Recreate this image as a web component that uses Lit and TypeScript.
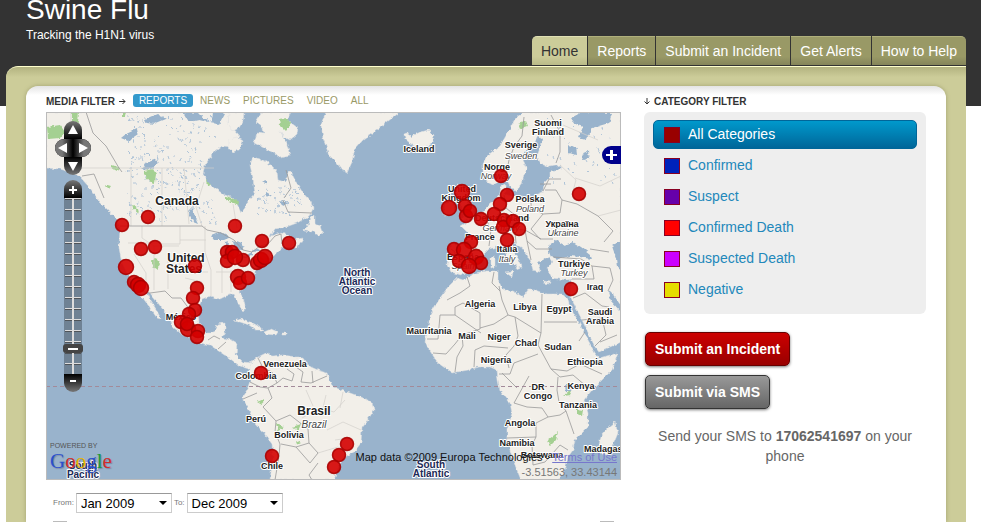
import { LitElement, html, css, svg } from "lit";
import { customElement } from "lit/decorators.js";
import { classMap } from "lit/directives/class-map.js";

type Label = [number, number, string, string];

const LAND = [
  // North and Central America
  "M46 112L231 112L228 123L240 136L233 147L222 146L213 153L205 165L203 173L207 183L217 190L225 195L234 198L238 206L241 213L245 208L248 201L255 193L253 178L250 165L253 157L260 159L267 162L273 167L277 173L278 180L285 182L290 170L296 182L303 193L311 202L313 209L309 216L297 223L286 227L275 229L270 236L277 234L282 232L288 235L293 240L303 238L297 248L290 247L283 247L277 252L273 257L263 262L257 266L255 271L254 279L246 285L239 291L243 298L246 308L243 312L238 303L234 294L226 296L220 299L210 296L202 299L198 309L199 323L206 333L214 333L217 324L225 323L225 332L222 338L232 340L237 343L236 355L243 362L252 363L250 369L240 366L229 358L220 352L210 345L200 343L187 337L174 328L167 315L158 303L150 293L147 291L150 300L156 309L161 319L157 318L148 305L140 294L135 290L128 275L122 263L119 248L120 228L117 220L107 209L100 202L90 188L80 177L73 173L60 169L46 168Z",
  // Arctic islands
  "M262 112L291 112L287 120L298 128L297 134L290 140L284 137L280 131L286 141L290 156L280 158L272 152L262 147L254 143L257 133L264 134L263 128L256 122Z",
  "M229 112L244 112L243 121L239 128L233 131L228 125Z",
  "M229 139L237 137L243 141L240 149L233 152L229 147Z",
  // Newfoundland
  "M304 231L309 223L311 217L315 216L315 224L321 226L323 232L319 236L314 232Z",
  // Greenland
  "M326 112L321 124L323 138L329 155L336 162L342 170L347 173L352 162L355 149L363 140L367 137L377 130L387 122L400 112Z",
  // Iceland
  "M404 134L408 133L411 137L418 133L428 130L434 135L433 142L425 147L414 146L410 143L405 139Z",
  // Cuba and Hispaniola
  "M233 321L241 319L251 322L258 326L264 330L256 330L249 325L240 322Z",
  "M264 332L271 329L278 332L276 335L265 334Z",
  "M281 333L286 333L286 335L281 335Z",
  // South America
  "M250 367L252 361L258 357L266 353L272 356L283 355L296 357L303 357L305 362L311 367L320 371L327 373L332 386L341 390L350 393L361 397L372 402L374 410L369 418L362 427L361 443L354 452L343 458L339 466L334 480L270 480L273 457L272 444L263 432L255 423L249 410L243 400L243 396L247 390L250 381Z",
  // Great Britain and Ireland
  "M458 184L465 186L463 193L467 203L474 212L474 218L460 221L465 213L461 208L461 200L457 192Z",
  "M445 204L452 202L455 206L453 214L444 215Z",
  // Europe and western Asia
  "M523 112L515 119L507 134L500 146L488 155L483 164L483 173L487 182L493 185L500 181L506 178L511 188L516 191L522 184L524 174L527 168L523 160L525 151L534 144L538 136L543 140L540 148L537 156L541 164L549 167L562 165L561 169L550 171L550 177L544 183L543 192L531 197L520 197L510 196L505 194L505 184L501 186L499 198L490 203L483 212L471 220L461 226L468 233L469 245L451 244L447 264L451 272L461 275L470 271L478 260L489 249L500 246L505 254L517 266L516 269L521 267L519 260L512 249L513 242L522 248L530 259L533 270L540 272L538 262L549 257L552 262L547 268L552 278L567 280L572 279L570 290L571 298L582 320L595 347L599 352L610 347L621 342L621 112Z",
  "M505 272L513 271L512 277Z",
  "M491 258L495 257L495 267L491 268Z",
  "M543 281L551 282L550 284L543 283Z",
  // Africa
  "M457 278L463 280L476 273L486 271L498 271L498 280L503 290L513 291L523 297L528 290L535 290L546 294L562 294L568 299L569 304L579 323L588 340L595 353L599 358L618 353L612 370L592 390L584 400L588 413L588 427L575 440L573 450L568 457L565 470L558 480L521 480L513 460L507 440L507 430L512 413L510 403L500 390L498 380L497 370L490 367L478 367L468 370L452 373L438 363L428 348L425 341L428 330L430 315L440 298L448 287Z",
  // Madagascar
  "M615 422L618 433L613 445L608 455L601 453L599 445L601 436L608 428Z",
];

const WATER = [
  "M549 252L548 246L556 240L564 245L573 242L581 247L590 254L592 259L580 257L570 256L558 259L551 257Z",
  "M612 246L621 240L621 270L617 268L616 258Z",
  "M608 291L613 294L621 306L621 312L611 301Z",
  "M211 236L221 232L231 237L224 240L214 240Z",
  "M225 243L229 242L228 254L224 257Z",
  "M233 240L241 243L244 249L238 252L234 246Z",
  "M243 257L252 252L252 255L245 259ZM252 251L259 248L260 251L253 252Z",
  "M188 211L192 207L196 220L198 224L193 222Z",
  "M142 170L146 163L157 159L159 162L151 169ZM121 138L126 134L137 129L138 134L128 141Z",
  "M145 119L157 114L166 119L154 124L147 123Z",
  "M183 112L199 113L208 122L199 120L189 122Z",
  "M213 112L225 114L219 125L212 122Z",
  "M571 118L582 112L612 113L609 123L592 128L586 140L578 138L583 127L575 124Z",
  "M568 145L576 147L577 155L568 153ZM581 154L588 151L589 158L583 160Z",
  "M565 385L572 385L571 391L566 391Z",
  "M262 181L267 180L267 184ZM280 201L288 203L283 206ZM267 193L272 196L266 196Z",
];

const GREEN = [
  "M47 127L60 125L65 132L60 138L48 139Z",
  "M72 112L79 112L78 123L72 121Z",
  "M144 171L153 169L156 174L155 183L149 181L144 175Z",
  "M279 119L287 118L291 124L286 131L280 125Z",
  "M206 180L210 184L207 187ZM226 196L237 200L239 205L226 200Z",
  "M104 184L111 186L109 189ZM111 165L120 168L118 171L111 167Z",
  "M132 204L138 209L139 213L133 208ZM122 112L126 112L125 117L122 117Z",
  "M152 260L156 258L160 264L157 270L153 267Z",
  "M257 402L264 399L262 405ZM276 424L284 427L278 430ZM292 427L301 424L298 431ZM296 440L301 443L297 445Z",
  "M577 409L583 410L582 416L577 414ZM563 396L569 391L571 395ZM548 440L558 432L556 440L550 446Z",
  "M518 124L526 121L528 126L520 129Z",
];

const BORDERS =
  "M120 226H202L207 230L221 233L234 240L243 250L252 252L260 246L268 244L275 236L281 234L282 244M135 290L150 293L165 291L172 298L181 298L190 310L197 317M86 112L93 133L106 146L119 168L122 172M82 176L94 174L104 198M283 200L288 212L312 213M286 170L291 188L284 198M208 340L214 336L220 339M218 349L226 342M258 358L263 368L272 372L277 383L268 388L272 398L263 407L276 421L275 432L280 444L279 456L275 480M250 382L260 387L268 388M243 399L257 393M277 383L283 378L292 381L294 374L287 369M296 367L303 372L301 382L311 383L327 376M312 371L313 383M276 421L290 415L308 429L309 443L296 447L281 444M309 443L318 453L310 463L296 447M318 463L309 475L312 480M427 339L438 339L440 315L455 315L455 307L463 303L480 313L480 329L462 335L455 344L446 354L433 353M455 315L481 333M480 328L494 324L508 315L515 317L518 336L514 346L506 355L509 368M508 315L502 300L499 286M515 317L541 333L542 294M544 322H577M541 333L538 345L551 369L567 371L580 364M538 354L514 363L510 374H499M551 369L560 377L573 375L586 386M529 376L524 385L514 403L527 407L542 408L548 417L536 423L536 437L507 438M558 377L557 390L559 402L566 411L574 434M548 417L560 415L566 411M536 437L532 445L533 465L545 462L560 445L568 450M462 335L463 346L457 357L455 372M474 367L475 350L484 346L508 348M502 373L517 388M447 300L460 293L470 286L467 277M494 272L492 283L500 291M573 298L585 293L602 306L609 307M582 320L602 318L606 335L595 346M579 341L585 332M600 342L617 335M580 364L602 374M551 115L560 132L560 152L556 163M524 117L522 136L514 147L509 160L506 176M545 190L556 190L562 200L560 213L543 214L531 208L531 197M562 200L577 204L598 216L613 231L604 242M543 214L531 229L540 239L553 239M504 195L506 208L516 216L530 218M506 208L490 221L481 212M483 212L491 230L489 246M491 230L504 228L525 230L541 239M515 232L516 243M525 230L527 241L536 249L552 249M527 241L531 260M469 246L480 250M451 249L455 252L453 270M553 257L581 259L592 266L594 279L572 279M592 266L610 268L613 280L608 291M543 191L549 179H561M540 184L551 184M590 249L609 252";

const STATES =
  "M142 226V238L154 246H179M128 243H160M154 246V290M134 254L146 273V286M160 244H180V226M180 240H206M180 256H205M168 256V289M180 256V272H208M205 226V252L211 270V296M185 278L202 282M222 260V293M231 270V292M216 272H252M237 262L250 260M71 170V112M131 168V226M162 168V226M79 168H214M184 168L189 224M204 182L196 207L202 226M233 204L237 228M302 418L320 408L334 412L345 400M327 430L343 422L361 430M306 390L313 406M326 395L322 412M343 392L340 408M335 440L350 438M318 453L338 447M563 125L598 140M575 178L600 186M560 165L576 180L572 195M600 186L621 176M598 216L621 210";

// Repeatable scatter of small lakes across the Canadian shield.
const speckles = (): string => {
  let seed = 7;
  const next = () => (seed = (seed * 16807) % 2147483647) / 2147483647;
  let d = "";
  for (let i = 0; i < 300; i++) {
    const x = Math.round(128 + next() * 88);
    const y = Math.round(114 + next() * 108);
    if (x > 200 && y > 140 && y < 196) continue;
    d += `M${x} ${y}l${Math.round(next() * 3) - 1} ${1 + Math.round(next() * 2)}`;
  }
  for (let i = 0; i < 60; i++) {
    d += `M${Math.round(257 + next() * 44)} ${Math.round(186 + next() * 28)}l2 ${Math.round(next() * 2)}`;
  }
  for (let i = 0; i < 50; i++) {
    d += `M${Math.round(545 + next() * 70)} ${Math.round(114 + next() * 70)}l1 ${Math.round(next() * 3)}`;
  }
  return d;
};
const LAKES = speckles();

const LABELS: Label[] = [
  [177, 205, "big", "Canada"], [186, 262, "big", "United"], [184, 273, "big", "States"],
  [314, 415, "big", "Brasil"], [314, 428, "it10", "Brazil"],
  [357, 276, "sea", "North"], [357, 285, "sea", "Atlantic"], [357, 294, "sea", "Ocean"],
  [431, 468, "sea", "South"], [431, 477, "sea", "Atlantic"],
  [83, 469, "sea", "South"], [83, 478, "sea", "Pacific"],
  [419, 152, "sm", "Iceland"], [548, 126, "sm", "Suomi"], [548, 135, "sm", "Finland"],
  [521, 148, "sm", "Sverige"], [521, 159, "it", "Sweden"],
  [497, 170, "sm", "Norge"], [496, 179, "it", "Norway"],
  [462, 192, "sm", "United"], [461, 201, "sm", "Kingdom"],
  [530, 202, "sm", "Polska"], [530, 212, "it", "Poland"], [502, 221, "sm", "Deutschland"],
  [501, 231, "it", "Germany"], [480, 240, "sm", "France"],
  [562, 227, "sm", "Україна"], [563, 236, "it", "Ukraine"],
  [507, 252, "sm", "Italia"], [507, 262, "it", "Italy"],
  [463, 260, "sm", "España"], [463, 269, "it", "Spain"],
  [574, 267, "sm", "Türkiye"], [574, 276, "it", "Turkey"], [595, 290, "sm", "Iraq"],
  [181, 320, "sm", "México"], [480, 307, "sm", "Algeria"], [525, 310, "sm", "Libya"],
  [559, 312, "sm", "Egypt"], [600, 315, "sm", "Saudi"], [600, 324, "sm", "Arabia"],
  [429, 334, "sm", "Mauritania"], [467, 339, "sm", "Mali"], [499, 340, "sm", "Niger"],
  [526, 346, "sm", "Chad"], [558, 350, "sm", "Sudan"], [496, 363, "sm", "Nigeria"],
  [585, 365, "sm", "Ethiopia"], [538, 390, "sm", "DR"], [538, 399, "sm", "Congo"],
  [581, 389, "sm", "Kenya"], [578, 408, "sm", "Tanzania"], [520, 426, "sm", "Angola"],
  [517, 446, "sm", "Namibia"], [542, 458, "sm", "Botswana"], [610, 452, "sm", "Madagascar"],
  [285, 367, "sm", "Venezuela"], [256, 379, "sm", "Colombia"], [256, 422, "sm", "Perú"],
  [289, 438, "sm", "Bolivia"], [272, 469, "sm", "Chile"],
];

const REPORTS: [number, number, number][] = [
  [148, 217, 7], [122, 225, 7], [235, 226, 7], [141, 249, 7], [155, 247, 7], [195, 266, 7],
  [126, 267, 8], [134, 282, 7], [138, 285, 8], [141, 288, 8], [197, 288, 7],
  [227, 252, 7], [232, 252, 7], [227, 261, 7], [243, 260, 7], [235, 257, 8],
  [262, 241, 7], [289, 243, 7], [257, 263, 7], [261, 260, 8], [265, 257, 8],
  [238, 277, 8], [240, 283, 7], [248, 278, 7], [193, 298, 7], [195, 310, 7], [189, 314, 7],
  [181, 322, 7], [188, 329, 8], [198, 331, 7], [197, 337, 7], [187, 324, 7],
  [261, 373, 7], [272, 456, 7], [347, 444, 7], [339, 455, 7], [334, 467, 7],
  [501, 176, 7], [579, 194, 7], [462, 192, 8], [449, 208, 8], [465, 206, 7], [466, 216, 7],
  [470, 211, 7], [481, 219, 7], [507, 195, 7], [500, 204, 7], [494, 214, 7], [504, 220, 7],
  [503, 227, 7], [513, 221, 7], [519, 229, 7], [507, 240, 7], [471, 242, 7], [454, 249, 7],
  [464, 250, 8], [476, 257, 8], [459, 261, 7], [481, 263, 7], [469, 266, 8], [571, 289, 7],
];

@customElement("world-map")
export class WorldMap extends LitElement {
  static styles = css`
    :host { display: block; position: relative; overflow: hidden; }
    .map { display: block; width: 100%; background: #99b3cc; }
    text { font-family: "Liberation Sans", Arial, sans-serif; text-anchor: middle; fill: #222;
      stroke: #fff; stroke-width: 2px; stroke-linejoin: round; paint-order: stroke; }
    .sm { font-size: 9px; font-weight: bold; }
    .big { font-size: 12px; font-weight: bold; }
    .it { font-size: 9px; font-style: italic; fill: #444; }
    .it10 { font-size: 10px; font-style: italic; fill: #444; }
    .sea { font-size: 10px; font-weight: bold; fill: #1c2a57; }
    .land { fill: #f2efe9; stroke: #dcdfe0; stroke-width: 0.5px; }
    .water { fill: #99b3cc; }
    .green { fill: #a4d092; }
    .line { fill: none; stroke: #999; stroke-width: 0.8px; }
    .state { fill: none; stroke: #d3d0cb; stroke-width: 0.7px; }
    .lakes { fill: none; stroke: #a9bfd6; stroke-width: 0.9px; }
    .equator { stroke: #a38a99; stroke-dasharray: 4 3; }
    .pin { fill: #d40000; fill-opacity: 0.9; stroke: #a80000; stroke-opacity: 0.9; stroke-width: 1.5px; }
    .edge { position: absolute; inset: 0; border: 1px solid #bbb; pointer-events: none; }
    button { border: 0; padding: 0; display: block; cursor: pointer; }
    button svg { display: block; }
    .tools { position: absolute; left: 9px; top: 9px; width: 36px; display: flex;
      flex-direction: column; align-items: center; }
    .pan { display: flex; flex-direction: column; align-items: center; margin-bottom: 5px; }
    .mid { display: flex; background: #000; border-radius: 9px; }
    .tools button { width: 18px; height: 18px; }
    .up { background: linear-gradient(#777, #000); border-radius: 9px 9px 0 0; }
    .down { background: linear-gradient(#000, #777); border-radius: 0 0 9px 9px; }
    .left { background: linear-gradient(90deg, #777 40%, #000); border-radius: 9px 0 0 9px; }
    .right { background: linear-gradient(90deg, #000, #777 60%); border-radius: 0 9px 9px 0; }
    .zoom { display: block; appearance: none; writing-mode: vertical-lr; direction: rtl; margin: 0;
      width: 20px; height: 176px;
      background:
        linear-gradient(#ddd, #ddd) center / 2px 100% no-repeat,
        repeating-linear-gradient(#ddd 0 1px, #444b 1px 2px, transparent 2px 11px) center / 16px 100% no-repeat,
        linear-gradient(#6f8294, #6f8294) center / 18px 100% no-repeat; }
    .zoom::-webkit-slider-thumb { appearance: none; width: 20px; height: 9px; border-radius: 3px;
      background: linear-gradient(#fff, #fff) center / 10px 2px no-repeat, #444; }
    .layers { position: absolute; right: 0; top: 34px; width: 19px; height: 18px;
      background: #00008b; border-radius: 9px 0 0 9px; }
    .powered { position: absolute; left: 4px; bottom: 9px; display: flex; flex-direction: column; }
    .by { font: 7px/10px "Liberation Sans", Arial, sans-serif; color: #555; }
    .logo { font: 21px/20px "Liberation Serif", serif; text-shadow: 1px 1px 1px #5577; }
    .b { color: #2a50cc; } .r { color: #d02c2c; } .y { color: #e5b400; } .g { color: #189a38; }
    .credit { position: absolute; right: 4px; bottom: 0; text-align: right; color: #111;
      font: 11px/15px "Liberation Sans", Arial, sans-serif; }
    .credit a { color: #7777cc; }
    .coords { color: #777; }
  `;

  private icon(d: string) {
    return html`<svg width="18" height="18" viewBox="0 0 18 18" aria-hidden="true"><path d=${d} fill="#fff" /></svg>`;
  }

  render() {
    return html`
      <svg class="map" viewBox="46 112 575 368" role="img" aria-label="World map of reports">
        <defs>
          <filter id="coast" filterUnits="userSpaceOnUse" x="40" y="106" width="590" height="380">
            <feTurbulence type="fractalNoise" baseFrequency="0.25" numOctaves="2" seed="4" />
            <feDisplacementMap in="SourceGraphic" scale="4" xChannelSelector="R" yChannelSelector="G" />
          </filter>
        </defs>
        <g filter="url(#coast)">
          ${LAND.map((d) => svg`<path class="land" d=${d} />`)}
          <path class="lakes" d=${LAKES} />
          ${WATER.map((d) => svg`<path class="water" d=${d} />`)}
          ${GREEN.map((d) => svg`<path class="green" d=${d} />`)}
        </g>
        <path class="state" d=${STATES} />
        <path class="line" d=${BORDERS} />
        <line class="equator" x1="46" x2="621" y1="386.5" y2="386.5" />
        ${LABELS.map(([x, y, kind, name]) => svg`<text class=${kind} x=${x} y=${y}>${name}</text>`)}
        ${REPORTS.map(([x, y, r]) => svg`<circle class="pin" cx=${x} cy=${y} r=${r - 0.5} />`)}
      </svg>
      <div class="edge"></div>
      <div class="tools">
        <div class="pan">
          <button class="up" aria-label="Pan up">${this.icon("M9 4L14 13H4Z")}</button>
          <div class="mid">
            <button class="left" aria-label="Pan left">${this.icon("M3 9L12 4V14Z")}</button>
            <button class="right" aria-label="Pan right">${this.icon("M15 9L6 4V14Z")}</button>
          </div>
          <button class="down" aria-label="Pan down">${this.icon("M9 14L14 5H4Z")}</button>
        </div>
        <button class="up" aria-label="Zoom in">${this.icon("M8 6H10V9H13V11H10V14H8V11H5V9H8Z")}</button>
        <input class="zoom" type="range" min="0" max="16" value="2" aria-label="Zoom level" />
        <button class="down" aria-label="Zoom out">${this.icon("M6 6H12V8H6Z")}</button>
      </div>
      <button class="layers" aria-label="Show layers">${this.icon("M8 4H11V8H15V10H11V14H8V10H4V8H8Z")}</button>
      <div class="powered">
        <span class="by">POWERED BY</span>
        <span class="logo"><span class="b">G</span><span class="r">o</span><span class="y">o</span><span class="b">g</span><span class="g">l</span><span class="r">e</span></span>
      </div>
      <div class="credit">
        <div>Map data ©2009 Europa Technologies - <a href="#terms">Terms of Use</a></div>
        <div class="coords">-3.51563, 33.43144</div>
      </div>
    `;
  }
}

const TABS = ["Home", "Reports", "Submit an Incident", "Get Alerts", "How to Help"];
const MEDIA = ["REPORTS", "NEWS", "PICTURES", "VIDEO", "ALL"];
const CATEGORIES = [
  ["All Categories", "#990000"],
  ["Confirmed", "#0022bb"],
  ["Suspect", "#6600aa"],
  ["Confirmed Death", "#ff0000"],
  ["Suspected Death", "#cc00ff"],
  ["Negative", "#e6dc00"],
];

@customElement("app-root")
export class AppRoot extends LitElement {
  static styles = css`
    :host { display: flex; flex-direction: column; min-height: 100vh; color: #333;
      font-family: "Liberation Sans", Arial, sans-serif;
      background: linear-gradient(#333 0 106px, #fff 106px); }
    a { text-decoration: none; }
    header { display: flex; justify-content: space-between; align-items: flex-end; height: 65px;
      padding: 0 15px 1px 6px; }
    .brand { align-self: flex-start; padding-left: 20px; color: #fff; }
    h1 { margin: 0 0 7px; font-size: 28px; line-height: 20px; font-weight: normal; }
    .tagline { margin: 0; font-size: 12px; line-height: 16px; }
    nav { display: flex; gap: 1px; }
    .tab { padding: 0 9px; font-size: 14px; line-height: 28px; color: #fff;
      border-top: 1px solid #b0b07c; background: linear-gradient(#999966 70%, #85855a); }
    .tab:first-child { border-top-left-radius: 5px; }
    .tab:last-child { border-top-right-radius: 5px; }
    .tab.on { color: #333; border-top-color: #e0e0b4; background: linear-gradient(#cccc99 70%, #babb88); }
    .frame { flex: 1; display: flex; margin: 0 15px 0 6px; padding: 19px 20px 0;
      border-top: 1px solid #ffffcc; border-radius: 12px 0 0 0;
      background: linear-gradient(#b3b380, #cccc99 10px); }
    main { flex: 1; display: flex; gap: 23px; align-items: flex-start; padding: 8px 20px 0;
      border-radius: 12px 12px 0 0; box-shadow: 0 0 4px #a0a070;
      background: linear-gradient(#e4e4e4, #fff 9px); }
    .mapside { flex: 1; min-width: 0; }
    aside { width: 282px; }
    .bar { display: flex; align-items: center; height: 13px; margin-bottom: 5px; }
    h2 { display: flex; align-items: center; gap: 4px; margin: 0; font-size: 10px; line-height: 13px; color: #333; padding-top: 1px; }
    .media { display: flex; gap: 1px; margin-left: 7px; }
    .media a { padding: 0 6px; font-size: 10px; line-height: 13px; color: #999966; border-radius: 3px; }
    .media a.on { color: #fff; background: #3399cc; }
    .dates { display: flex; align-items: center; gap: 2px; margin: 13px 0 8px; padding-left: 7px; }
    .dates label { font-size: 8px; line-height: 20px; color: #777; }
    select { appearance: none; width: 96px; height: 20px; padding: 0 4px; border: 1px solid #ccc;
      border-top-color: #999; font: 13px "Liberation Sans", Arial, sans-serif; color: #000;
      background: #fff; }
    .pick { position: relative; display: flex; }
    .pick svg { position: absolute; right: 5px; top: 8px; pointer-events: none; }
    .grips { display: flex; justify-content: space-between; padding: 0 7px; }
    .grips span { width: 14px; height: 1px; background: #bbb; }
    ul { list-style: none; margin: 0 0 18px; padding: 8px 9px 10px; display: grid; gap: 2px;
      background: #eee; border-radius: 6px; }
    .cat { display: flex; align-items: center; gap: 8px; height: 27px; padding: 0 10px;
      border: 1px solid transparent; border-radius: 5px; font-size: 14px; line-height: 16px; color: #2288bb; }
    .name { padding-bottom: 2px; }
    .cat.on { color: #fff; border-color: #006699; background: linear-gradient(#0099cc, #006699); }
    .swatch { box-sizing: border-box; width: 16px; height: 16px; border: 1px solid #880022; }
    .actions { display: flex; flex-direction: column; align-items: flex-start; gap: 9px; padding-left: 1px; }
    .btn { height: 34px; padding: 0 9px; border: 1px solid #660000; border-radius: 5px; color: #fff;
      font: bold 14px "Liberation Sans", Arial, sans-serif; box-shadow: 0 1px 3px #0008;
      background: linear-gradient(#cc0000, #990000); }
    .btn.sms { border-color: #333; background: linear-gradient(#999, #666); }
    .note { margin: 17px 0 0; text-align: center; font-size: 14px; line-height: 20px; color: #666; }
  `;

  private picker(id: string, value: string) {
    return html`<span class="pick">
      <select id=${id}><option>${value}</option></select>
      <svg width="8" height="5" viewBox="0 0 8 5" aria-hidden="true"><path d="M0 0H8L4 4Z" /></svg>
    </span>`;
  }

  render() {
    return html`
      <header>
        <div class="brand">
          <h1>Swine Flu</h1>
          <p class="tagline">Tracking the H1N1 virus</p>
        </div>
        <nav>${TABS.map((t, i) => html`<a href="#" class=${classMap({ tab: true, on: i === 0 })}>${t}</a>`)}</nav>
      </header>
      <div class="frame">
        <main>
          <section class="mapside">
            <div class="bar">
              <h2>MEDIA FILTER
                <svg width="7" height="7" viewBox="0 0 7 7" fill="none" stroke="#333" aria-hidden="true"><path d="M0 3.5H6M3.5 1L6 3.5L3.5 6" /></svg>
              </h2>
              <div class="media">${MEDIA.map((m, i) => html`<a href="#" class=${classMap({ on: i === 0 })}>${m}</a>`)}</div>
            </div>
            <world-map></world-map>
            <div class="dates">
              <label for="from">From:</label>${this.picker("from", "Jan 2009")}
              <label for="to">To:</label>${this.picker("to", "Dec 2009")}
            </div>
            <div class="grips"><span></span><span></span></div>
          </section>
          <aside>
            <div class="bar">
              <h2>
                <svg width="6" height="7" viewBox="0 0 6 7" fill="none" stroke="#333" aria-hidden="true"><path d="M3 0V6M0.5 3.5L3 6L5.5 3.5" /></svg>
                CATEGORY FILTER
              </h2>
            </div>
            <ul>
              ${CATEGORIES.map(([name, color], i) => html`<li>
                <a href="#" class=${classMap({ cat: true, on: i === 0 })}><span class="swatch" style="background:${color}"></span><span class="name">${name}</span></a>
              </li>`)}
            </ul>
            <div class="actions">
              <button class="btn">Submit an Incident</button>
              <button class="btn sms">Submit via SMS</button>
            </div>
            <p class="note">Send your SMS to <b>17062541697</b> on your phone</p>
          </aside>
        </main>
      </div>
    `;
  }
}
